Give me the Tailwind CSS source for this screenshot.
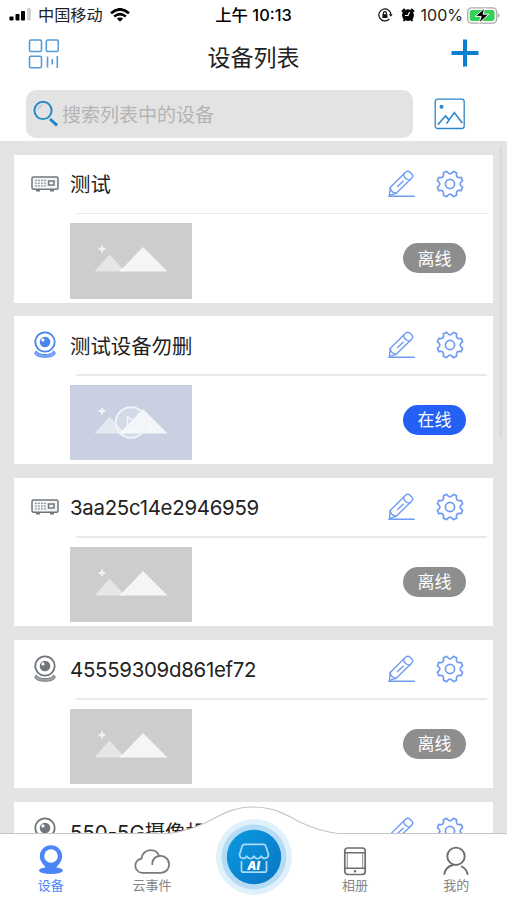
<!DOCTYPE html>
<html lang="zh-CN">
<head>
    <meta charset="UTF-8">
    <meta name="viewport" content="width=device-width, initial-scale=1.0">
    <title>设备列表</title>
    <script src="https://cdn.jsdelivr.net/npm/@tailwindcss/browser@4"></script>
</head>
<body class="bg-white text-[#222] font-['Inter','Noto_Sans_CJK_SC',sans-serif]">
    <!-- icons -->
    <svg class="hidden">
        <symbol id="icon-nvr" viewBox="0 0 28 16">
            <rect x="1" y="1" width="26" height="12.2" rx="1.5" fill="#f3f5f6" stroke="currentColor" stroke-width="1.5"/>
            <path d="M4.2 4.3h10.5M4.2 7.1h10.5M4.2 9.9h10.5" stroke="currentColor" stroke-width="1.3" stroke-dasharray="1.5 1.5"/>
            <rect x="17.5" y="5" width="5.5" height="4" fill="none" stroke="currentColor" stroke-width="1.5"/>
            <path d="M5 14.8h4M19 14.8h4" stroke="currentColor" stroke-width="1.6"/>
        </symbol>
        <symbol id="icon-cam" viewBox="0 0 22 27">
            <circle cx="11" cy="11" r="9.7" fill="none" stroke="currentColor" stroke-width="1.8"/>
            <circle cx="11" cy="11" r="5.3" fill="currentColor"/>
            <circle cx="8.9" cy="8.9" r="1.6" fill="#fff"/>
            <path d="M2.4 20Q-.2 21.4 1.200 23.300C2.600 25.300 6.500 26.300 11 26.300s8.400-1 9.800-3q1.400-1.900-1.200-3.300C18.200 22.600 15 23.600 11 23.600S3.800 22.600 2.400 20z" fill="currentColor" fill-opacity=".7" stroke="currentColor" stroke-width=".9" stroke-linejoin="round"/>
        </symbol>
        <symbol id="icon-edit" viewBox="0 0 27 28">
            <g fill="none" stroke="currentColor" stroke-width="1.400" stroke-linejoin="round" stroke-linecap="round">
                <path d="M2.200 17.400 17.800 2.100q2-1.900 4 0l2 2q1.900 2 0 3.900L8.200 23.300 1.500 25.300z"/>
                <path d="M15.600 4.300q.5 5 6.300 5.900M2.200 17.400q.5 5.200 6 5.900M9.500 16.600l5.600-5.400"/>
                <path d="M.8 26.200h25.400" stroke-width="1.600"/>
            </g>
        </symbol>
        <symbol id="icon-gear" viewBox="0 0 28 28">
            <g fill="none" stroke="currentColor" stroke-width="1.700" stroke-linejoin="round">
                <path d="M10.750 1.400Q14 6.400 17.250 1.400L20.600 2.800Q19.400 8.600 25.200 7.400L26.600 10.750Q21.600 14 26.600 17.250L25.200 20.600Q19.400 19.400 20.600 25.200L17.250 26.600Q14 21.600 10.750 26.600L7.400 25.200Q8.600 19.400 2.800 20.600L1.400 17.250Q6.400 14 1.400 10.750L2.800 7.400Q8.600 8.600 7.400 2.800Z"/>
                <circle cx="14" cy="14" r="4.600"/>
            </g>
        </symbol>
    </svg>

    <div class="relative flex h-[900px] w-[507px] flex-col overflow-hidden">
        <header class="flex h-[141px] shrink-0 flex-col">
            <!-- status bar -->
            <div class="flex h-[30px] items-center pl-[9px] pr-[7px] text-[16px] text-black">
                <div class="flex flex-1 items-center">
                    <svg class="h-[13px] w-[23px]" viewBox="0 0 23 13">
                        <rect x=".5" y="8.500" width="4" height="4" rx=".8"/>
                        <rect x="6.500" y="6" width="4" height="6.500" rx=".8"/>
                        <rect x="12" y="3" width="4" height="9.500" rx=".8"/>
                        <rect x="18" y="0" width="4" height="12.500" rx=".8" fill="#d2d2d2"/>
                    </svg>
                    <span class="ml-[6px] text-[16.200px] text-[#222]">中国移动</span>
                    <svg class="ml-[7px] h-[14px] w-[20px]" viewBox="0 0 20 14" fill="none" stroke="#000" stroke-width="2.600">
                        <path d="M1 5.200Q10-2.600 19 5.200M4.200 8.600Q10 3.800 15.800 8.600"/>
                        <path d="M6.800 10.600Q10 8.200 13.200 10.600L10 13.800z" fill="#000" stroke="none"/>
                    </svg>
                </div>
                <span class="mr-[2px] text-[16.400px] font-medium">上午 10:13</span>
                <div class="flex flex-1 items-center justify-end">
                    <svg class="h-[14px] w-[15px]" viewBox="0 0 15 14" fill="none" stroke="#111" stroke-width="1.200">
                        <path d="M11.300 11A6 6 0 1 1 12.900 6.500"/>
                        <path d="M10.900 6.300h3.800l-1.900 2.500z" fill="#111" stroke="none"/>
                        <rect x="4.400" y="6.200" width="5" height="3.800" fill="#111" stroke="none"/>
                        <path d="M5.400 6.500V5.200a1.500 1.500 0 0 1 3 0v1.300"/>
                    </svg>
                    <svg class="ml-[8px] h-[14px] w-[14px]" viewBox="0 0 14 14">
                        <circle cx="7" cy="7.200" r="5.900"/>
                        <path d="M1 3.800 3.800 1M13 3.800 10.200 1M2.500 13l1.500-2M11.500 13 10 11" stroke="#000" stroke-width="2"/>
                        <path d="M8.600 3.900 7 7.500H3.900" fill="none" stroke="#fff" stroke-width="1.200"/>
                    </svg>
                    <span class="ml-[6px] text-[16px] text-[#222]">100%</span>
                    <svg class="ml-[4px] h-[17px] w-[33px]" viewBox="0 0 33 17">
                        <rect x=".7" y=".9" width="29" height="15.200" rx="4" fill="#fff" stroke="#aaa" stroke-width="1.300"/>
                        <rect x="2.700" y="3" width="24.800" height="11" rx="2.200" fill="#35d159"/>
                        <path d="M31 6.200q1.600.6 1.600 2.200t-1.600 2.200z" fill="#aaa"/>
                        <path d="M18 .8 8.200 9.400h6L11.800 16.400l10-9.200h-5.800z" stroke="#fff" stroke-width="1"/>
                    </svg>
                </div>
            </div>

            <!-- title bar -->
            <div class="flex h-[54px] items-center justify-between pl-[28px] pr-[28px]">
                <svg class="mb-[6px] h-[30px] w-[31px]" viewBox="0 0 31 30" fill="none" stroke="#559bd6" stroke-width="1.600">
                    <rect x="1.500" y="1" width="12" height="11.500" rx="1.500"/>
                    <rect x="18.300" y="1" width="12" height="11.500" rx="1.500"/>
                    <rect x="1.500" y="17.300" width="12" height="11.500" rx="1.500"/>
                    <path d="M19.500 17.500v11M24.300 20v5.500M29.300 17v12"/>
                </svg>
                <h1 class="mr-[3px] pt-[3px] text-[23px] leading-none">设备列表</h1>
                <svg class="mb-[8px] h-[28px] w-[28px]" viewBox="0 0 28 28" stroke="#0a7fd0" stroke-width="4">
                    <path d="M14 .5v27M.5 14h27"/>
                </svg>
            </div>

            <!-- search -->
            <div class="flex items-center pl-[26px] pt-[6px]">
                <div class="flex h-[48px] w-[387px] items-center rounded-[10px] bg-[#e3e3e3] pl-[7px]">
                    <svg class="h-[26px] w-[26px]" viewBox="0 0 26 26" fill="none" stroke="#1f86c8">
                        <circle cx="10" cy="9.500" r="8.600" stroke-width="1.900"/>
                        <path d="M4.800 9Q5.500 5 9.300 4.400" stroke="#8cc0e4" stroke-width="1"/>
                        <path d="m17 18 7 6.300" stroke-width="3"/>
                    </svg>
                    <span class="ml-[3px] pt-[2px] text-[19px] leading-none text-[#b4b4b4]">搜索列表中的设备</span>
                </div>
                <svg class="ml-[21px] h-[32px] w-[32px]" viewBox="0 0 32 32" fill="none" stroke="#2b86cb" stroke-width="1.300">
                    <rect x="1.200" y="1.200" width="29" height="29.300" rx="2.500"/>
                    <circle cx="7.500" cy="8.700" r="2" fill="#2b86cb" stroke="none"/>
                    <path d="M3.800 26.800 11.500 18l3.300 3.600M12.500 25.600 20.300 14.600 28.300 25" stroke-width="1.600"/>
                </svg>
            </div>
        </header>

        <main class="relative flex flex-1 flex-col overflow-hidden bg-[#e4e4e4]">
            <div id="devices" class="flex flex-col gap-[13.800px] px-[14px] pt-[13.700px]"></div>
            <div class="absolute right-[4px] top-[5px] h-[292px] w-[4px] rounded-full bg-[#dcdcdc]"></div>
        </main>

        <!-- tab bar -->
        <nav class="relative flex h-[66px] shrink-0 bg-white text-[13px] leading-none text-[#858585]">
            <svg class="absolute -top-[30px] left-0 h-[34px] w-[507px]" viewBox="0 0 507 34">
                <path d="M0 29.500H168Q187 27.500 205 19C223 10 233 3 253.500 3S284 10 302 19Q320 27.500 339 29.500H507V34H0z" fill="#fff"/>
                <path d="M0 29.500H168Q187 27.500 205 19C223 10 233 3 253.500 3S284 10 302 19Q320 27.500 339 29.500H507" fill="none" stroke="#c6c6c6" stroke-width="1.200"/>
            </svg>
            <a class="relative flex flex-1 flex-col items-center pt-[10px] text-[#4a86f7]">
                <svg class="h-[32px] w-[26px]" viewBox="0 0 26 32" fill="currentColor">
                    <ellipse cx="13" cy="26.500" rx="12" ry="3.600"/>
                    <path d="M13 1.200A11.200 11.200 0 0 0 1.800 12.400C1.800 19 8.500 22 9.500 27h7c1-5 7.700-8 7.700-14.600A11.200 11.200 0 0 0 13 1.200z"/>
                    <circle cx="13" cy="12" r="6.800" fill="#fff"/>
                </svg>
                <span class="mt-[3px]">设备</span>
            </a>
            <a class="relative flex flex-1 flex-col items-center pt-[10px]">
                <svg class="h-[32px] w-[38px]" viewBox="0 0 38 32" fill="none" stroke="#777b7d" stroke-width="1.800" stroke-linecap="round">
                    <path d="M8.800 28.800a7.200 7.200 0 0 1-.2-14.300C9 9.500 12.800 6.200 17.600 6.200c4 0 7.200 2 8.500 5.800 5.600-.9 10 3.300 10 8.400 0 5-3.800 8.400-8.600 8.400zM19.300 20.200c0-4.500 2.800-7.500 6.800-8.200"/>
                </svg>
                <span class="mt-[3px]">云事件</span>
            </a>
            <a class="relative flex flex-1 justify-center">
                <svg class="absolute -top-[16px] h-[78px] w-[78px]" viewBox="0 0 78 78">
                    <defs>
                        <linearGradient id="blue" x1="0" y1="0" x2="1" y2="1">
                            <stop offset="0" stop-color="#0b9be0"/>
                            <stop offset="1" stop-color="#0a74c4"/>
                        </linearGradient>
                    </defs>
                    <circle cx="39" cy="39" r="38" fill="#e0f1fb"/>
                    <circle cx="39" cy="39" r="32.500" fill="#b5dcf4"/>
                    <circle cx="39" cy="39" r="27.200" fill="url(#blue)"/>
                    <g fill="none" stroke="#a9dcf8" stroke-width="1.700" stroke-linejoin="round" stroke-linecap="round">
                        <path d="M29.500 26.300h19q1.700 0 2.200 1.600l2.700 8.100c.3 4.800-5.300 5.800-7.200 2.200-1.700 3.400-5.500 3.400-7.200 0-1.700 3.400-5.500 3.400-7.200 0-1.900 3.600-7.500 2.600-7.200-2.200l2.700-8.100q.5-1.600 2.200-1.600z"/>
                        <path d="M26.500 43.500v9.500q0 1.200 1.200 1.200h22.600q1.200 0 1.200-1.200v-9.500"/>
                    </g>
                    <text x="38.500" y="51.800" text-anchor="middle" fill="#fff" class="font-['Inter',sans-serif] text-[11.500px] font-black italic">AI</text>
                </svg>
            </a>
            <a class="relative flex flex-1 flex-col items-center pt-[10px]">
                <svg class="h-[32px] w-[24px]" viewBox="0 0 24 32" fill="none" stroke="#6b6f71" stroke-width="1.700">
                    <rect x="1.800" y="4" width="20.400" height="26.500" rx="3"/>
                    <path d="M2 8.700h20M2 24.300h20" stroke-width="1.400"/>
                    <path d="M4.300 9v15M19.700 9v15" stroke-width=".8"/>
                    <circle cx="12" cy="27.300" r="1.200" fill="#6b6f71" stroke="none"/>
                </svg>
                <span class="mt-[3px]">相册</span>
            </a>
            <a class="relative flex flex-1 flex-col items-center pt-[10px]">
                <svg class="h-[32px] w-[28px]" viewBox="0 0 28 32" fill="none" stroke="#6b6f71" stroke-width="1.900" stroke-linecap="round">
                    <circle cx="14" cy="12.300" r="8.700"/>
                    <path d="M11 21C6 22.200 3 25.500 2.300 30M19.700 22.500c3.500 1.700 5.300 4.300 5.800 7.500"/>
                </svg>
                <span class="mt-[3px]">我的</span>
            </a>
        </nav>
    </div>

    <script>
        const devices = [
            { name: '测试', icon: 'nvr', online: false },
            { name: '测试设备勿删', icon: 'cam', online: true },
            { name: '3aa25c14e2946959', icon: 'nvr', online: false },
            { name: '45559309d861ef72', icon: 'cam', online: false },
            { name: '550-5G摄像机', icon: 'cam', online: false }
        ];

        const icons = {
            nvr: '<svg class="h-[16px] w-[28px]"><use href="#icon-nvr"/></svg>',
            cam: '<svg class="mb-[1px] h-[27px] w-[22px]"><use href="#icon-cam"/></svg>'
        };

        const play = `
            <circle cx="61" cy="37.500" r="15.300" fill="#fff" fill-opacity=".2" stroke="#f0f4f8" stroke-width="2"/>
            <path d="M57.500 32v11l9-5.500z" fill="none" stroke="#f0f4f8" stroke-width="1.600"/>`;

        // latin names sit higher in the line than chinese ones
        const nameClass = name => /^[0-9a-f]+$/.test(name)
            ? 'ml-[11px] flex-1 pt-[2px] text-[20.400px] leading-none tracking-[-0.270px]'
            : 'ml-[11px] flex-1 pt-[4px] text-[20.400px] leading-none';

        document.getElementById('devices').innerHTML = devices.map(d => `
            <section class="flex h-[148px] shrink-0 flex-col bg-white">
                <div class="flex h-[58px] items-center pr-[29px]">
                    <div class="ml-[16px] flex w-[29px] justify-center ${d.online ? 'text-[#4a86ef]' : 'text-[#71777d]'}">${icons[d.icon]}</div>
                    <h2 class="${nameClass(d.name)}">${d.name}</h2>
                    <svg class="h-[28px] w-[27px] text-[#6f9cf2]"><use href="#icon-edit"/></svg>
                    <svg class="ml-[21px] h-[28px] w-[28px] text-[#6f9cf2]"><use href="#icon-gear"/></svg>
                </div>
                <div class="ml-[62px] mr-[6px] h-[1.500px] bg-[#e9e9e9]"></div>
                <div class="mt-[9px] flex items-start justify-between pl-[56px] pr-[27px]">
                    <svg class="h-[75.500px] w-[122px] ${d.online ? 'bg-[#c8d0e2]' : 'bg-[#cdcdcd]'}" viewBox="0 0 122 75.500">
                        <path d="M32 22.500l1 2.500 2.500 1-2.500 1-1 2.500-1-2.500-2.500-1 2.500-1z" fill="#f4f4f4" stroke="#f4f4f4" stroke-width=".8"/>
                        <path d="M24.500 48.500 39.500 31.500 55 48.500z" fill="#fff" fill-opacity=".5"/>
                        <path d="M49.500 48.500 73 24 97.500 48.500z" fill="#fff" fill-opacity=".8"/>
                        ${d.online ? play : ''}
                    </svg>
                    <span class="mt-[20px] flex h-[30px] w-[63px] items-center justify-center rounded-full pt-[2px] text-[17px] leading-none text-white ${d.online ? 'bg-[#2460f4]' : 'bg-[#8e8e8e]'}">${d.online ? '在线' : '离线'}</span>
                </div>
            </section>`).join('');
    </script>
</body>
</html>
